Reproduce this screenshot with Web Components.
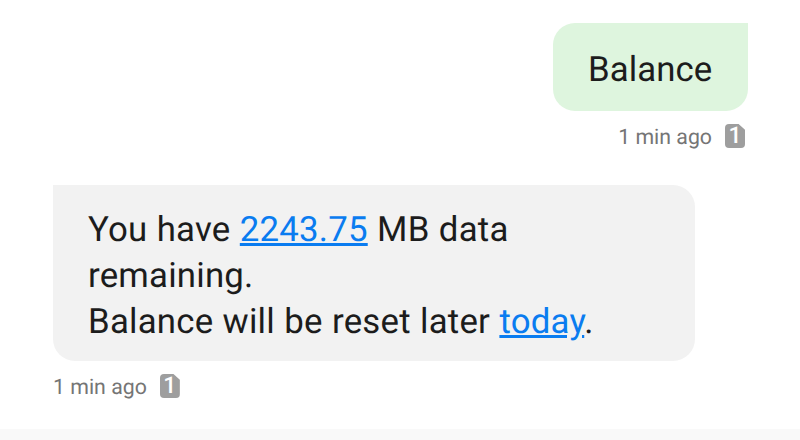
<!DOCTYPE html>
<html>
<head>
<meta charset="utf-8">
<title>Messages</title>
<style>
  html, body { margin: 0; height: 100%; background: #fff; }
  body { font-family: Roboto, "Liberation Sans", sans-serif; overflow: hidden; text-rendering: geometricPrecision; }
</style>
</head>
<body>
<sms-thread>
  <sms-message kind="sent" time="1 min ago" sim="1">Balance</sms-message>
  <sms-message kind="received" time="1 min ago" sim="1">You have <a href="#">2243.75</a> MB data<br>remaining.<br>Balance will be reset later <a href="#">today</a>.</sms-message>
</sms-thread>

<script>
class SimBadge extends HTMLElement {
  constructor() {
    super();
    this.attachShadow({ mode: "open" });
    this.shadowRoot.innerHTML = `
    <style>
      :host {
        display: inline-flex;
        width: 20px;
        height: 24px;
        align-items: center;
        justify-content: center;
        background: #9e9e9e;
        color: #fff;
        font: 500 23px/24px Roboto, "Liberation Sans", sans-serif;
        border-radius: 4px;
        clip-path: polygon(0 0, 68% 0, 100% 24%, 100% 100%, 0 100%);
      }
    </style>
    <slot></slot>
    `;
  }
}

class SmsMessage extends HTMLElement {
  constructor() {
    super();
    this.attachShadow({ mode: "open" });
    this.shadowRoot.innerHTML = `
    <style>
      :host {
        display: flex;
        flex-direction: column;
        align-items: flex-start;
      }

      :host([kind="sent"]) {
        align-items: flex-end;
      }

      .bubble {
        box-sizing: border-box;
        font-size: 34.8px;
        line-height: 46px;
        letter-spacing: 0.2px;
        word-spacing: 0.5px;
        color: #1c1c1c;
        background: #f2f2f2;
        border-radius: 0 22px 22px 22px;
        padding: 22px 36px 16px 35px;
        width: 642px;
      }

      :host([kind="sent"]) .bubble {
        width: 195px;
        letter-spacing: 0.05px;
        background: #def5de;
        border-radius: 22px 0 22px 22px;
        padding: 24px 20px 18px 35px;
      }

      ::slotted(a) {
        color: #0a7cf0;
      }

      .meta {
        display: flex;
        align-items: center;
        gap: 13px;
        height: 24px;
        margin-top: 13px;
        font-size: 21.3px;
        color: #757575;
      }

      .time {
        padding-top: 2px;
      }

      :host([kind="sent"]) .meta {
        margin-right: 3px;
      }
    </style>
    <div class="bubble"><slot></slot></div>
    <div class="meta"><span class="time"></span><sim-badge></sim-badge></div>
    `;
  }

  connectedCallback() {
    this.shadowRoot.querySelector(".time").textContent = this.getAttribute("time");
    this.shadowRoot.querySelector("sim-badge").textContent = this.getAttribute("sim");
  }
}

class SmsThread extends HTMLElement {
  constructor() {
    super();
    this.attachShadow({ mode: "open" });
    this.shadowRoot.innerHTML = `
    <style>
      :host {
        display: flex;
        flex-direction: column;
        box-sizing: border-box;
        width: 800px;
        height: 440px;
        padding: 23px 52px 0 53px;
        background: #fff;
      }

      .list {
        display: flex;
        flex-direction: column;
        gap: 37px;
        flex: 1;
      }

      .footer {
        height: 11px;
        margin: 0 -52px 0 -53px;
        background: #f9f9f9;
      }
    </style>
    <div class="list"><slot></slot></div>
    <div class="footer"></div>
    `;
  }
}

customElements.define("sim-badge", SimBadge);
customElements.define("sms-message", SmsMessage);
customElements.define("sms-thread", SmsThread);
</script>
</body>
</html>
